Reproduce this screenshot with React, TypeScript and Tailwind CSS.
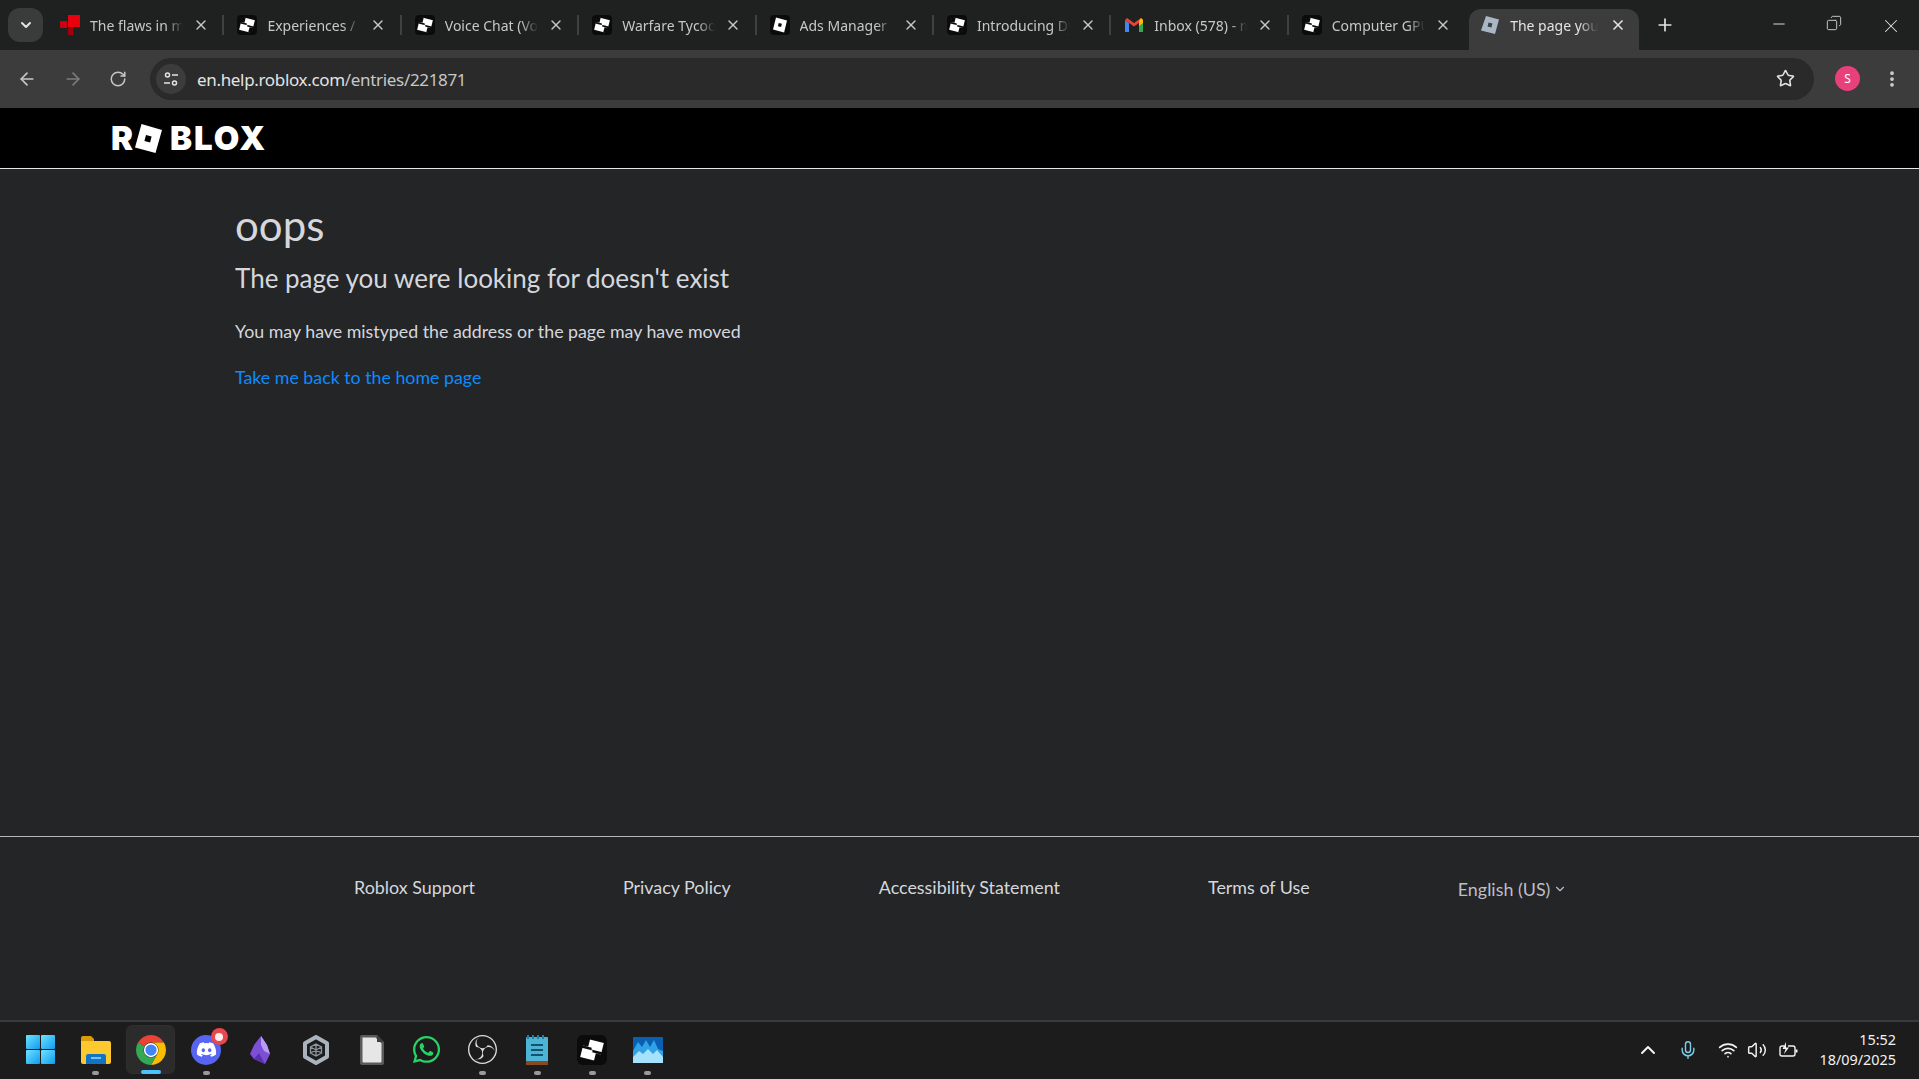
import { ArrowLeft, ArrowRight, ChevronDown, ChevronUp, Copy, Minus, MoreVertical, Plus, RotateCw, Star, Volume2, Wifi, X, Mic } from "lucide-react";
import { FaDiscord, FaWhatsapp } from "react-icons/fa";
import { SiObsstudio } from "react-icons/si";

function RobloxIcon({ size = 20 }: { size?: number }) {
  return (
    <svg width={size} height={size} viewBox="0 0 20 20" className="shrink-0">
      <rect width="20" height="20" rx="4" fill="#0b0b0b" />
      <g transform="rotate(14 10 10)">
        <rect x="3.500" y="3.500" width="13" height="13" fill="#fff" />
        <rect x="3" y="3" width="4" height="5.500" fill="#0b0b0b" />
        <rect x="13" y="11.500" width="4" height="5.500" fill="#0b0b0b" />
        <path d="M3 8.500h6.500v1.300h7.500v1.700h-6.500v-1.300H3z" fill="#0b0b0b" />
      </g>
    </svg>
  );
}

function AdsIcon() {
  return (
    <svg width="20" height="20" viewBox="0 0 20 20" className="shrink-0">
      <rect width="20" height="20" rx="4" fill="#0b0b0b" />
      <path d="M6 2.500l11 2.900-2.900 12L3 14.600zM8.700 8l-.8 3.200 3.200.8.800-3.200z" fill="#fff" fillRule="evenodd" />
    </svg>
  );
}

function FlawsIcon() {
  return (
    <svg width="20" height="20" viewBox="0 0 20 20" className="shrink-0">
      <rect x="8" y="0" width="12" height="12" fill="#e8000f" />
      <rect x="0" y="6" width="7" height="7" fill="#cc0010" />
      <rect x="8" y="13" width="5" height="7" fill="#a00010" />
    </svg>
  );
}

function GmailIcon() {
  return (
    <svg width="20" height="20" viewBox="0 0 20 20" className="shrink-0">
      <path d="M1 5v12h4V8z" fill="#4285f4" />
      <path d="M15 8v9h4V5z" fill="#34a853" />
      <path d="M1 5l9 6.500L19 5l-2-2-7 5-7-5z" fill="#ea4335" />
      <path d="M15 6v5l4-3V5l-2-2z" fill="#fbbc04" />
    </svg>
  );
}

function ActiveIcon() {
  return (
    <svg width="20" height="20" viewBox="0 0 20 20" className="shrink-0">
      <path d="M6 1l13 3.500-4 14.500L1 15.500z" fill="#a9b6c4" />
      <rect x="8" y="8" width="4" height="4" fill="#3c4044" transform="rotate(15 10 10)" />
    </svg>
  );
}

const tabs = [
  { title: "The flaws in my game", icon: <FlawsIcon /> },
  { title: "Experiences / Creator", icon: <RobloxIcon /> },
  { title: "Voice Chat (Voice)", icon: <RobloxIcon /> },
  { title: "Warfare Tycoon", icon: <RobloxIcon /> },
  { title: "Ads Manager", icon: <AdsIcon /> },
  { title: "Introducing Dynamic", icon: <RobloxIcon /> },
  { title: "Inbox (578) - mail", icon: <GmailIcon /> },
  { title: "Computer GPU", icon: <RobloxIcon /> },
];

function Tab({ title, icon, last }: { title: string; icon: React.ReactNode; last: boolean }) {
  return (
    <div className="flex h-[41px] w-[177.4px] shrink-0 items-center pb-[9px] pl-[13px]">
      {icon}
      <span className="ml-[10px] w-[93px] overflow-hidden whitespace-nowrap text-[14px] text-[#c7c7c7] [mask-image:linear-gradient(to_right,black_82%,transparent_100%)]">
        {title}
      </span>
      <X size={16} strokeWidth={2} className="ml-[10px] shrink-0 text-[#c7c7c7]" />
      <div className={last ? "ml-auto h-[20px] w-[2px]" : "ml-auto h-[20px] w-[2px] bg-[#3f4141]"} />
    </div>
  );
}

function TabStrip() {
  return (
    <div className="flex h-[50px] shrink-0 items-end bg-[#1f2121]">
      <div className="mb-[8px] ml-[8px] flex h-[34px] w-[35px] items-center justify-center rounded-xl bg-[#3a3b3b]">
        <ChevronDown size={16} strokeWidth={3} className="text-[#e3e3e3]" />
      </div>
      <div className="ml-[4px] flex">
        {tabs.map((tab, i) => (
          <Tab key={tab.title} title={tab.title} icon={tab.icon} last={i === tabs.length - 1} />
        ))}
      </div>
      <div className="ml-[3px] flex h-[41px] w-[170px] items-center rounded-t-xl bg-[#3c3c3c] pb-[9px] pl-[11px]">
        <ActiveIcon />
        <span className="ml-[10px] w-[88px] overflow-hidden whitespace-nowrap text-[14px] text-[#e3e3e3] [mask-image:linear-gradient(to_right,black_78%,transparent_100%)]">
          The page you were
        </span>
        <X size={16} strokeWidth={2.5} className="ml-[12px] text-[#e3e3e3]" />
      </div>
      <div className="flex h-[41px] w-[52px] items-center justify-center pb-[9px]">
        <Plus size={20} strokeWidth={2} className="text-[#e3e3e3]" />
      </div>
      <div className="ml-auto flex h-[50px] items-start pt-[15px] text-[#e3e3e3]">
        <Minus size={18} strokeWidth={1.25} className="mr-[38px]" />
        <Copy size={16} strokeWidth={1.25} className="mr-[38px] -scale-x-100" />
        <X size={22} strokeWidth={1.1} className="mr-[17px]" />
      </div>
    </div>
  );
}

function Toolbar() {
  return (
    <div className="flex h-[59px] shrink-0 items-center border-b border-[#000] bg-[#3c3c3c] pb-[1px]">
      <ArrowLeft size={20} strokeWidth={2} className="ml-[17px] text-[#c7c7c7]" />
      <ArrowRight size={20} strokeWidth={2} className="ml-[26px] text-[#7b7b7b]" />
      <RotateCw size={18} strokeWidth={2} className="ml-[26px] text-[#c7c7c7]" />
      <div className="ml-[23px] flex h-[42px] w-[1664px] items-center rounded-full bg-[#2a2a2a] pl-[6px]">
        <div className="flex h-[30px] w-[30px] items-center justify-center rounded-full bg-[#3c3c3c]">
          <svg width="16" height="16" viewBox="0 0 16 16" fill="none" stroke="#e3e3e3" strokeWidth="1.5">
            <circle cx="4.5" cy="4" r="2" />
            <path d="M9 4h6M1 12h6" />
            <circle cx="11.5" cy="12" r="2" />
          </svg>
        </div>
        <span className="ml-[11px] pt-[2px] font-['Noto_Sans'] text-[17px] tracking-[-0.33px] text-[#e3e3e3]">
          en.help.roblox.com<span className="text-[#c7c7c7]">/entries/221871</span>
        </span>
        <Star size={19} strokeWidth={2} className="ml-auto mr-[19px] text-[#e3e3e3]" />
      </div>
      <div className="ml-[21px] flex h-[25px] w-[25px] items-center justify-center rounded-full bg-[#e8407a] text-[12px] text-white">
        S
      </div>
      <MoreVertical size={20} strokeWidth={2.5} className="ml-[22px] text-[#d0d0d0]" />
    </div>
  );
}

function Logo() {
  return (
    <div className="flex h-[59px] shrink-0 items-center bg-black pl-[111px]">
      <div className="flex items-center font-['Inter'] text-[33px] font-black leading-none tracking-[2px] text-white">
        <span>R</span>
        <svg width="27" height="29" viewBox="0 0 27 29" className="mr-[8px] shrink-0">
          <path d="M6.500 0L27 6 20.500 29 0 23.500zM11 11l-1.600 6 5.700 1.500 1.500-6z" fill="#fff" fillRule="evenodd" />
        </svg>
        <span>BLOX</span>
      </div>
    </div>
  );
}

function Content() {
  return (
    <div className="flex flex-1 flex-col border-t border-[#e6e6e6] bg-[#232527] pl-[235px] pt-[30px] font-['Lato']">
      <h1 className="text-[42px] leading-[52px] text-[#d5d7dd]">oops</h1>
      <h2 className="mt-[9px] text-[26px] leading-[36px] text-[#d5d7dd]">The page you were looking for doesn't exist</h2>
      <p className="mt-[22px] text-[17.8px] leading-[26px] text-[#d5d7dd]">You may have mistyped the address or the page may have moved</p>
      <a href="#" className="mt-[20px] text-[17.8px] leading-[26px] text-[#0a8cff]">Take me back to the home page</a>
    </div>
  );
}

function Footer() {
  return (
    <div className="h-[184px] shrink-0 border-t border-[#b8b8b8] bg-[#232527] pl-[354px] pt-[34px] font-['Lato']">
      <div className="flex items-center gap-[148px] text-[17.9px] leading-[28px] text-[#d5d7dd]">
        <span>Roblox Support</span>
        <span>Privacy Policy</span>
        <span>Accessibility Statement</span>
        <span>Terms of Use</span>
        <span className="flex items-center gap-[3px] pt-[4px] text-[#bdbec5]">
          English (US)
          <ChevronDown size={14} />
        </span>
      </div>
    </div>
  );
}

function TaskIcon({ children, dot, active }: { children: React.ReactNode; dot?: boolean; active?: boolean }) {
  return (
    <div className={active ? "relative flex h-[49px] w-[49px] items-center justify-center rounded-md border border-[#2e2e2e] bg-[#2b2b2b]" : "relative flex h-[49px] w-[49px] items-center justify-center"}>
      {children}
      {dot && <span className="absolute bottom-[-1px] h-[4px] w-[7px] rounded-full bg-[#9a9a9a]" />}
      {active && <span className="absolute bottom-[-1px] h-[4px] w-[20px] rounded-full bg-[#4cc2ff]" />}
    </div>
  );
}

function Taskbar() {
  return (
    <div className="flex h-[59px] shrink-0 items-center border-t-2 border-[#3a3a3a] bg-[#1c1c1c] pb-[2px] pl-[16px]">
      <div className="flex items-center gap-[6.2px]">
        <TaskIcon>
          <svg width="29" height="29" viewBox="0 0 29 29">
            <defs>
              <linearGradient id="win" x1="0" y1="0" x2="1" y2="1">
                <stop offset="0" stopColor="#6fe3ff" />
                <stop offset="1" stopColor="#0f9bf0" />
              </linearGradient>
            </defs>
            <rect width="14" height="14" rx="1" fill="url(#win)" />
            <rect x="15" width="14" height="14" rx="1" fill="url(#win)" />
            <rect y="15" width="14" height="14" rx="1" fill="url(#win)" />
            <rect x="15" y="15" width="14" height="14" rx="1" fill="url(#win)" />
          </svg>
        </TaskIcon>
        <TaskIcon dot>
          <svg width="30" height="28" viewBox="0 0 30 28">
            <path d="M0 2a2 2 0 012-2h8l3 3v4H0z" fill="#d99a0c" />
            <path d="M0 5h28a2 2 0 012 2v19a2 2 0 01-2 2H2a2 2 0 01-2-2z" fill="#fcc92f" />
            <path d="M5 20a2 2 0 012-2h16a2 2 0 012 2v8H5z" fill="#1274c4" />
            <rect x="10" y="21" width="10" height="2" fill="#6ec6f5" />
          </svg>
        </TaskIcon>
        <TaskIcon active>
          <svg width="30" height="30" viewBox="4 4 40 40">
            <path d="M6.680 14A20 20 0 0141.320 14H24A10 10 0 0015.340 19z" fill="#ea4335" />
            <path d="M41.320 14A20 20 0 0124 44L32.660 29A10 10 0 0024 14z" fill="#fbbc04" />
            <path d="M24 44A20 20 0 016.680 14L15.340 19A10 10 0 0032.660 29z" fill="#34a853" />
            <circle cx="24" cy="24" r="9.500" fill="#fff" />
            <circle cx="24" cy="24" r="7.500" fill="#4285f4" />
          </svg>
        </TaskIcon>
        <TaskIcon dot>
          <div className="flex h-[30px] w-[30px] items-center justify-center rounded-full bg-[#5865f2]">
            <FaDiscord size={21} className="text-white" />
          </div>
          <span className="absolute right-[3px] top-[3px] flex h-[17px] w-[17px] items-center justify-center rounded-full bg-[#e5484d]">
            <span className="h-[8px] w-[8px] rounded-full bg-white/90" />
          </span>
        </TaskIcon>
        <TaskIcon>
          <svg width="22" height="28" viewBox="0 0 22 28">
            <path d="M11 0l6 9 3 9-5 10-11-5-4-5 4-9z" fill="#7c4fd6" />
            <path d="M11 0l6 9 3 9-6-3-3-6z" fill="#b79cf2" />
            <path d="M4 23l5-6 6 11z" fill="#5a31ad" />
          </svg>
        </TaskIcon>
        <TaskIcon>
          <svg width="28" height="30" viewBox="0 0 28 30">
            <path d="M14 2l11 6.200v13.600L14 28 3 21.800V8.200z" fill="#1c1c1c" stroke="#aab4be" strokeWidth="4" strokeLinejoin="round" />
            <path d="M14 9l5.500 3v6L14 21l-5.500-3v-6zM14 9v12M8.500 12l11 6M19.500 12l-11 6" fill="none" stroke="#8d97a1" strokeWidth="1.300" />
          </svg>
        </TaskIcon>
        <TaskIcon>
          <svg width="25" height="30" viewBox="0 0 25 30">
            <path d="M1 2a2 2 0 012-2h15l7 7v21a2 2 0 01-2 2H3a2 2 0 01-2-2z" fill="#5a5a5a" />
            <path d="M3.500 2.500h13l6 6v18a1 1 0 01-1 1H4.500a1 1 0 01-1-1z" fill="#e6e6e6" />
            <path d="M18 0l7 7h-7z" fill="#3f3f3f" />
          </svg>
        </TaskIcon>
        <TaskIcon>
          <FaWhatsapp size={31} className="text-[#25d366]" />
        </TaskIcon>
        <TaskIcon dot>
          <SiObsstudio size={29} className="text-[#dcdcdc]" />
        </TaskIcon>
        <TaskIcon dot>
          <svg width="22" height="30" viewBox="0 0 22 30">
            <rect y="2" width="22" height="28" rx="1" fill="#4db4d6" />
            <rect y="26" width="22" height="4" fill="#8a4a20" />
            <path d="M2 0v4M7 0v4M12 0v4M17 0v4" stroke="#1f7fa6" strokeWidth="2" />
            <path d="M5 10h12M5 15h12M5 20h12" stroke="#14536f" strokeWidth="2" />
          </svg>
        </TaskIcon>
        <TaskIcon dot>
          <RobloxIcon size={30} />
        </TaskIcon>
        <TaskIcon dot>
          <svg width="30" height="26" viewBox="0 0 30 26">
            <rect width="30" height="26" rx="1" fill="#0a5fb0" />
            <path d="M0 14l5-9 4 5 4-7 4 7 4-7 4 9 5 2v12H0z" fill="#2fa3e6" />
            <path d="M0 20l6-6 4 3 5-5 5 5 4-4 6 7v6H0z" fill="#a6e2fb" />
          </svg>
        </TaskIcon>
      </div>
      <div className="ml-auto flex items-center text-[#f2f2f2]">
        <ChevronUp size={24} strokeWidth={2} />
        <Mic size={20} strokeWidth={1.75} className="ml-[18px] text-[#7ccbe4]" />
        <Wifi size={20} strokeWidth={2} className="ml-[20px]" />
        <Volume2 size={20} strokeWidth={1.75} className="ml-[9px]" />
        <svg width="20" height="18" viewBox="0 0 20 18" fill="none" stroke="currentColor" strokeWidth="1.4" className="ml-[12px]">
          <path d="M5 5H3a2 2 0 00-2 2v6a2 2 0 002 2h11a2 2 0 002-2V7a2 2 0 00-2-2H9" />
          <path d="M17.500 8.500v3" strokeWidth="2" />
          <path d="M7 1L3.500 8h3L5 13l5-6.500H7z" fill="currentColor" stroke="none" />
        </svg>
        <div className="ml-[20px] mr-[23px] flex flex-col items-end font-['Noto_Sans'] text-[14.4px] leading-[20px] text-[#f2f2f2]">
          <span>15:52</span>
          <span>18/09/2025</span>
        </div>
      </div>
    </div>
  );
}

export default function App() {
  return (
    <div className="flex h-[1079px] w-full flex-col overflow-hidden font-['Noto_Sans',sans-serif]">
      <TabStrip />
      <Toolbar />
      <Logo />
      <Content />
      <Footer />
      <Taskbar />
    </div>
  );
}
